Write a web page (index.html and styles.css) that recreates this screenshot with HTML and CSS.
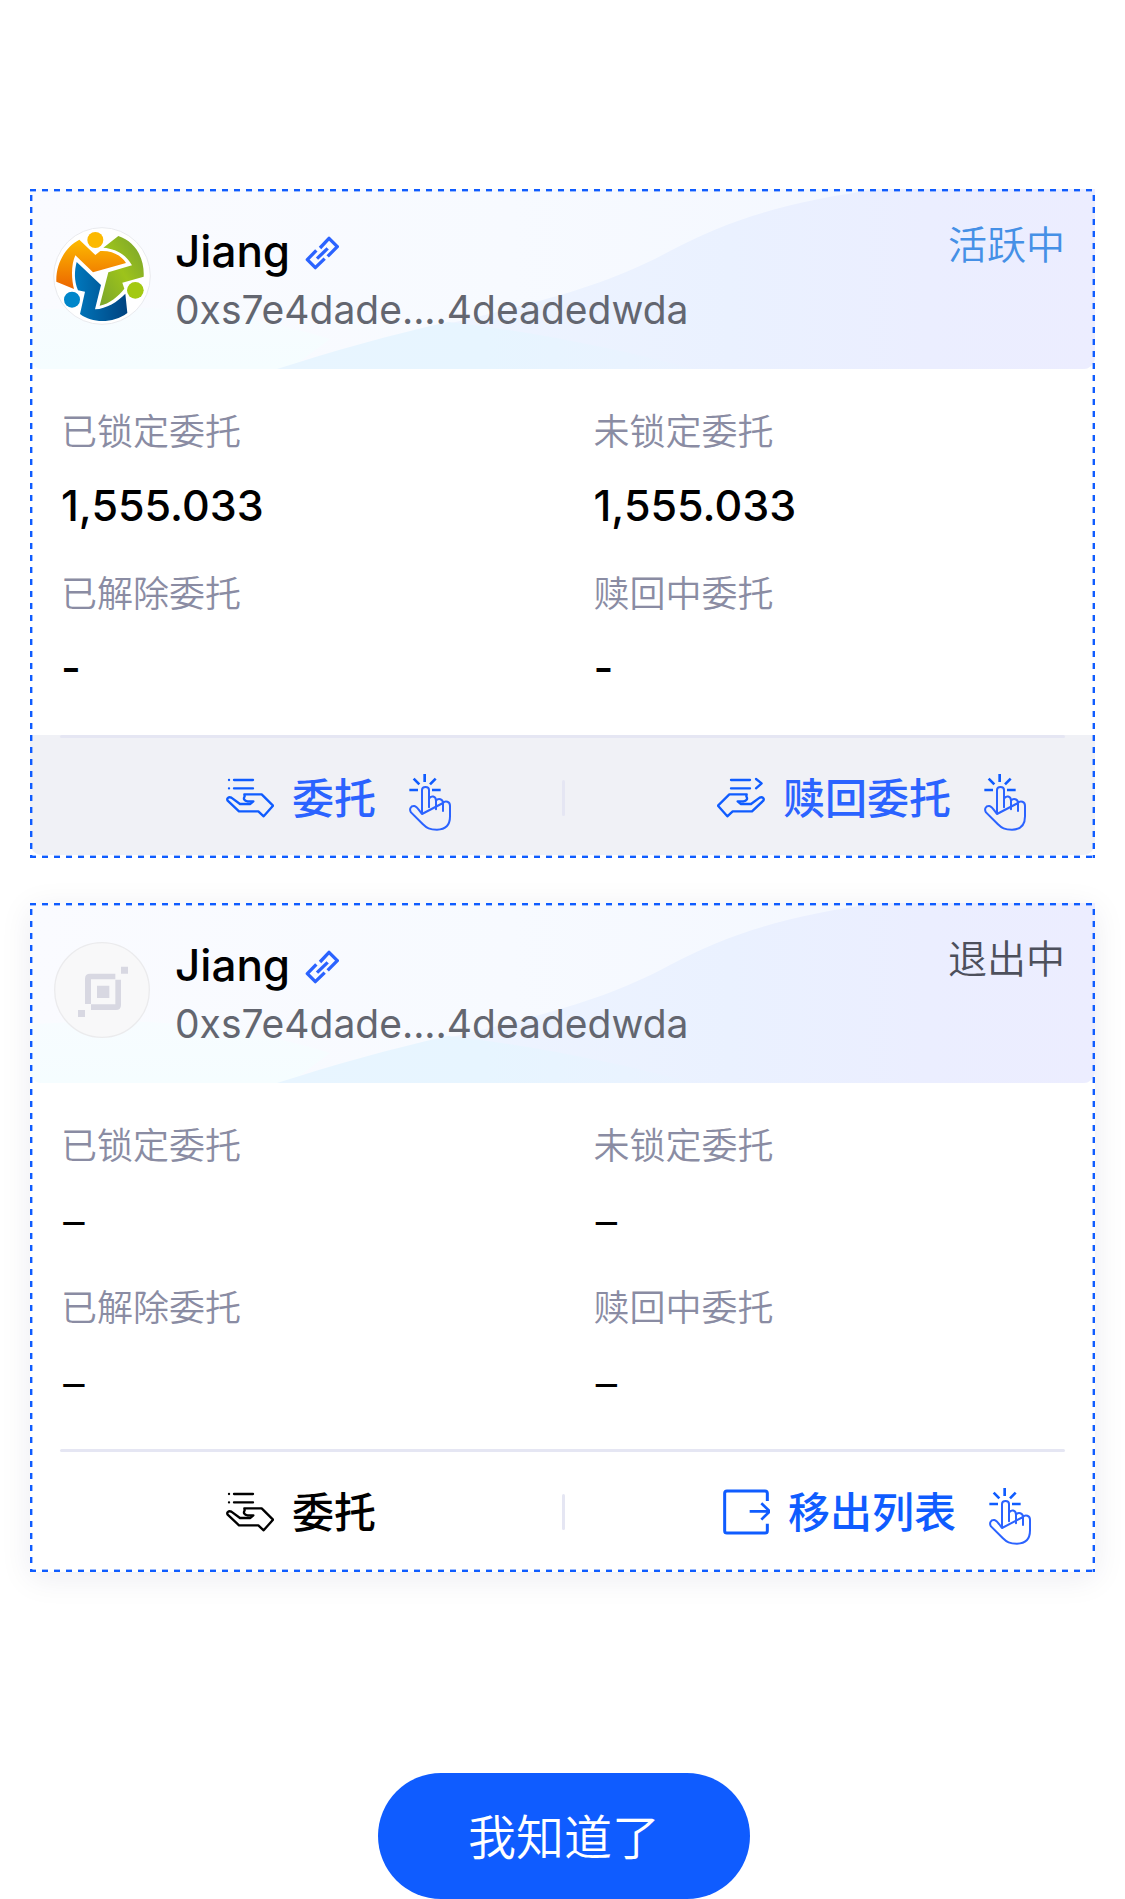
FILE: index.html
```html
<!DOCTYPE html>
<html lang="zh-CN">
<head>
<meta charset="utf-8">
<meta name="viewport" content="width=device-width, initial-scale=1">
<title>委托</title>
<link rel="stylesheet" href="styles.css">
</head>
<body>
<svg class="defs" aria-hidden="true">
  <defs>
    <linearGradient id="wave-violet" x1="0" y1="0" x2="1" y2="0">
      <stop offset="0" stop-color="#eef4ff"/><stop offset=".45" stop-color="#eaf1ff"/><stop offset=".75" stop-color="#ebeeff"/><stop offset="1" stop-color="#ecedff"/>
    </linearGradient>
    <linearGradient id="wave-cyan" x1="0" y1="0" x2="1" y2="0">
      <stop offset="0" stop-color="#e8f5ff"/><stop offset=".5" stop-color="#e7f5ff"/><stop offset="1" stop-color="#eaf2ff"/>
    </linearGradient>
    <linearGradient id="wave-mist" x1="0" y1="0" x2="0" y2="1">
      <stop offset="0" stop-color="#f7fcff"/><stop offset="1" stop-color="#f5fdff"/>
    </linearGradient>
    <linearGradient id="av-orange" x1="0" y1="0" x2="0" y2="1">
      <stop offset="0" stop-color="#fdbb00"/><stop offset="1" stop-color="#ec6500"/>
    </linearGradient>
    <linearGradient id="av-green" x1="0" y1="1" x2="1" y2="0">
      <stop offset="0" stop-color="#7aa52c"/><stop offset=".5" stop-color="#9dc31b"/><stop offset="1" stop-color="#76a02f"/>
    </linearGradient>
    <linearGradient id="av-blue" x1="0" y1="0" x2="1" y2="0">
      <stop offset="0" stop-color="#0078bd"/><stop offset="1" stop-color="#004380"/>
    </linearGradient>
    <symbol id="waves" viewBox="0 0 1065 180" preserveAspectRatio="none">
      <path d="M0 122C110 112 210 122 300 150L260 180H0Z" fill="url(#wave-mist)"/>
      <path d="M400 139C500 115 570 100 640 62C700 30 760 12 850 0H1065V180H660Z" fill="url(#wave-violet)"/>
      <path d="M247 180C300 163 360 146 418 133C500 142 590 160 664 180Z" fill="url(#wave-cyan)"/>
    </symbol>
    <symbol id="link" viewBox="855 168 105 102">
      <g fill="none" stroke="#2b63ff" stroke-width="10" stroke-linejoin="round" stroke-linecap="butt">
        <path d="M889 211L862 239L886 263L914 236"/>
        <path d="M900 204L927 175L952 200L923 229"/>
        <path d="M891 236L923 205"/>
      </g>
    </symbol>
    <symbol id="delegate" viewBox="45 162 144 144">
      <g fill="none" stroke="currentColor" stroke-width="7" stroke-linecap="round" stroke-linejoin="round">
        <path d="M54 180h.1M69 180h57M54 205h.1M69 205h57"/>
        <path d="M100 223H152L186 257L158 289L142 274H84L50 242C46 235 53 229 61 233L87 252H118L127 244H110C100 243 96 237 101 229Z"/>
      </g>
    </symbol>
    <symbol id="redeem" viewBox="51 162 144 144">
      <g fill="none" stroke="currentColor" stroke-width="7" stroke-linecap="round" stroke-linejoin="round">
        <path d="M93 180h57M93 205h57M168 177L185 190L168 205"/>
        <path d="M140 223H88L54 257L82 289L98 274H156L190 242C194 235 187 229 179 233L153 252H122L113 244H130C140 243 144 237 139 229Z"/>
      </g>
    </symbol>
    <symbol id="remove" viewBox="36 174 174 144">
      <g fill="none" stroke="currentColor" stroke-width="9">
        <path d="M202 213V190Q202 183 195 183H81Q74 183 74 190V302Q74 309 81 309H195Q202 309 202 302V281"/>
        <path d="M149 244H209M184 220L209 244L184 269" stroke-width="8"/>
      </g>
    </symbol>
    <symbol id="tap" viewBox="594 162 126 171">
      <g fill="none" stroke="#2b63ff" stroke-linecap="round" stroke-linejoin="round">
        <path stroke="#0f5cff" stroke-width="8" stroke-linecap="butt" d="M641 162V186M608 176L625 193M674 176L657 193M595 210H621M663 210H689"/>
        <path stroke-width="6" d="M633 282V210C633 198 654 198 654 210V262M654 236C660 225 675 228 675 242V268M675 242C682 233 696 237 696 249V273M696 249C703 240 717 245 717 257V289C717 319 702 329 678 329C656 329 647 324 635 312L600 277C594 268 599 257 610 258C617 259 622 267 633 282Z"/>
      </g>
    </symbol>
  </defs>
</svg>

<main class="page">
  <section class="card">
    <header class="card-head">
      <svg class="waves" aria-hidden="true"><use href="#waves"/></svg>
      <svg class="avatar" viewBox="99 141 294 294" aria-hidden="true">
        <circle cx="246" cy="288" r="145" fill="#fff" stroke="#e9eaee" stroke-width="3"/>
        <circle cx="226" cy="180" r="24" fill="#fcb900"/>
        <path d="M178 179L226 225L241 213C276 211 304 226 318 249L219 277L166 226C154 252 153 292 162 327L109 305C107 252 136 200 178 179Z" fill="url(#av-orange)"/>
        <path d="M250 203L295 168C346 184 374 235 371 290L307 308L313 326C294 350 269 371 239 377L265 277L336 256C318 224 288 206 250 203Z" fill="url(#av-green)"/>
        <path d="M170 246L243 315L225 388C260 386 292 366 316 341L322 399C280 430 218 431 180 402L195 335L174 331C162 302 163 273 170 246Z" fill="url(#av-blue)"/>
        <circle cx="156" cy="359" r="24" fill="#0086ca"/>
        <circle cx="346" cy="331" r="25" fill="#a3c912"/>
      </svg>
      <div class="who">
        <h2 class="name">Jiang <a class="link" href="#" aria-label="链接"><svg aria-hidden="true"><use href="#link"/></svg></a></h2>
        <p class="address">0xs7e4dade....4deadedwda</p>
      </div>
      <span class="status status-active">活跃中</span>
    </header>
    <dl class="metrics">
      <div><dt>已锁定委托</dt><dd>1,555.033</dd></div>
      <div><dt>未锁定委托</dt><dd>1,555.033</dd></div>
      <div><dt>已解除委托</dt><dd>-</dd></div>
      <div><dt>赎回中委托</dt><dd>-</dd></div>
    </dl>
    <footer class="card-foot shaded">
      <div class="actions">
        <div class="cell"><button class="action" type="button"><svg class="icon"><use href="#delegate"/></svg>委托<svg class="tap"><use href="#tap"/></svg></button></div>
        <i class="divider"></i>
        <div class="cell"><button class="action" type="button"><svg class="icon"><use href="#redeem"/></svg>赎回委托<svg class="tap"><use href="#tap"/></svg></button></div>
      </div>
    </footer>
  </section>

  <section class="card raised">
    <header class="card-head">
      <svg class="waves" aria-hidden="true"><use href="#waves"/></svg>
      <svg class="avatar" viewBox="99 153 294 294" aria-hidden="true">
        <circle cx="246" cy="300" r="142" fill="#f8f8f9" stroke="#ebebed" stroke-width="4"/>
        <g fill="#d8d8e2">
          <path d="M286 251V268H213V342H195V266Q195 251 210 251Z"/>
          <path d="M213 360V343H286V269H303V345Q303 360 288 360Z"/>
          <path d="M231 287h37v37h-37zM303 230h21v21h-21zM174 360h21v21h-21z"/>
        </g>
      </svg>
      <div class="who">
        <h2 class="name">Jiang <a class="link" href="#" aria-label="链接"><svg aria-hidden="true"><use href="#link"/></svg></a></h2>
        <p class="address">0xs7e4dade....4deadedwda</p>
      </div>
      <span class="status">退出中</span>
    </header>
    <dl class="metrics empty">
      <div><dt>已锁定委托</dt><dd>–</dd></div>
      <div><dt>未锁定委托</dt><dd>–</dd></div>
      <div><dt>已解除委托</dt><dd>–</dd></div>
      <div><dt>赎回中委托</dt><dd>–</dd></div>
    </dl>
    <footer class="card-foot">
      <div class="actions">
        <div class="cell"><button class="action plain" type="button"><svg class="icon"><use href="#delegate"/></svg>委托</button></div>
        <i class="divider"></i>
        <div class="cell"><button class="action strong" type="button"><svg class="icon icon-wide"><use href="#remove"/></svg>移出列表<svg class="tap"><use href="#tap"/></svg></button></div>
      </div>
    </footer>
  </section>

  <button class="confirm" type="button">我知道了</button>
</main>
</body>
</html>
```
FILE: styles.css
```css
* { box-sizing: border-box; margin: 0; padding: 0; }

body {
  background: #fff;
  color: #000;
  font-family: Inter, "Noto Sans CJK SC", sans-serif;
}

button { border: 0; background: none; font: inherit; cursor: pointer; }

.defs { position: absolute; width: 0; height: 0; }

.page {
  display: flex;
  flex-direction: column;
  padding: 189px 30px 0;
}

.card {
  position: relative;
  padding-bottom: 3px;
  background: #fff;
}
.card + .card { margin-top: 45px; }
.raised { box-shadow: 0 6px 30px rgba(20, 30, 80, .08); }

/* dashed outline: a solid 2px dash with a faint inner edge */
.card::after {
  --h: repeating-linear-gradient(90deg, #0f5cff 0 6px, transparent 6px 12px);
  --v: repeating-linear-gradient(180deg, transparent 0 6px, #0f5cff 6px 12px);
  --hs: repeating-linear-gradient(90deg, #0f5cff66 0 6px, transparent 6px 12px);
  --vs: repeating-linear-gradient(180deg, transparent 0 6px, #0f5cff66 6px 12px);
  content: "";
  position: absolute;
  inset: 0;
  pointer-events: none;
  background:
    var(--h) left top / 100% 2px no-repeat,
    var(--h) left bottom / 100% 2px no-repeat,
    var(--v) left top / 2px 100% no-repeat,
    var(--v) right top / 2px 100% no-repeat,
    var(--hs) left top / 100% 3px no-repeat,
    var(--hs) left bottom / 100% 3px no-repeat,
    var(--vs) left top / 3px 100% no-repeat,
    var(--vs) right top / 3px 100% no-repeat;
}

.card-head {
  position: relative;
  display: flex;
  align-items: flex-start;
  height: 180px;
  padding: 34px 30px 0 23px;
  border-radius: 0 0 12px 12px;
  background: linear-gradient(90deg, #fafbff, #f7faff 45%, #f2f6ff);
  overflow: hidden;
}
.card-head > * { position: relative; }
.card-head > .waves { position: absolute; inset: 0; width: 100%; height: 100%; }

.avatar { flex: none; width: 98px; height: 98px; margin-top: 4px; }

.who { flex: 1; margin-left: 24px; }
.name {
  display: flex;
  align-items: center;
  gap: 15px;
  font-size: 44px;
  font-weight: 500;
  line-height: 56px;
}
.link { padding-top: 4px; }
.link svg { display: block; width: 35px; height: 34px; }
.address { color: #636670; font-size: 39px; line-height: 62px; }

.status { color: #4d505c; font-size: 39px; font-weight: 350; line-height: 44px; }
.status-active { color: #4590e6; }

.metrics {
  display: grid;
  grid-template-columns: 1fr 1fr;
  row-gap: 33px;
  padding: 37px 0 38px;
}
.metrics div { padding-left: 31px; }
.metrics dt { color: #8a8ca3; font-size: 36px; font-weight: 350; line-height: 52px; }
.metrics dd { min-height: 60px; margin-top: 17px; font-size: 43px; font-weight: 500; line-height: 60px; }
.metrics.empty dd { font-family: "Noto Sans CJK SC", sans-serif; font-size: 48px; font-weight: 400; line-height: 54px; }

.card-foot { display: flex; flex-direction: column; height: 120px; }
.card-foot::before {
  content: "";
  height: 3px;
  margin: 0 30px;
  border-radius: 2px;
  background: #e5e6f3;
}
.shaded { background: #f0f1f6; border-radius: 0 0 12px 12px; }

.actions { flex: 1; display: flex; align-items: center; padding: 3px 0 0 2px; }
.cell { flex: 1; display: flex; justify-content: center; padding-left: 8px; }
.divider { width: 3px; height: 36px; border-radius: 2px; background: #e5e6f3; }

.action {
  position: relative;
  display: flex;
  align-items: flex-start;
  gap: 18px;
  height: 48px;
  color: #2b63ff;
  font-size: 42px;
  font-weight: 500;
  line-height: 50px;
}
.icon { width: 48px; height: 48px; color: #0f5cff; }
.icon-wide { width: 58px; }
.plain, .plain .icon { color: #000; }
.strong { color: #0f5cff; }
.tap { position: absolute; top: 0; left: 100%; width: 42px; height: 57px; margin-left: 33px; }

.confirm {
  align-self: center;
  height: 126px;
  margin: 201px 0 0 3px;
  padding: 3px 90px 0;
  border-radius: 63px;
  background: #0f5cff;
  color: #fff;
  font-size: 48px;
  font-weight: 350;
  line-height: 60px;
}
```
